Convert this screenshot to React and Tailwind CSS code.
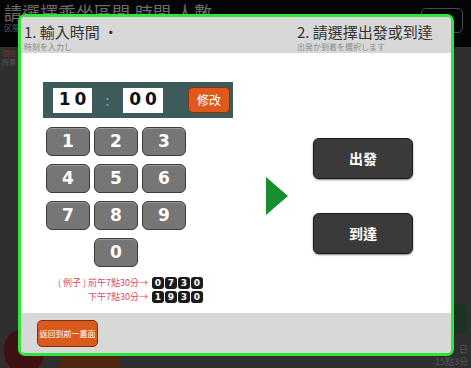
import { useState } from 'react'

const CJK = { fontFamily: '"Noto Sans CJK TC", "Noto Sans CJK JP", sans-serif' }
const NUM = { fontFamily: '"DejaVu Sans", "Noto Sans", sans-serif' }

function KeyButton({ label, onPress, className = '' }) {
  return (
    <button
      onClick={() => onPress(label)}
      className={`h-[29px] w-[44px] rounded-[6px] border border-[#3c3c3c] bg-[#767676] text-[17px] font-bold leading-none text-white shadow-[inset_0_1px_0_rgba(255,255,255,0.25)] ${className}`}
      style={NUM}
    >
      {label}
    </button>
  )
}

function DigitChips({ value }) {
  return (
    <div className="flex gap-[1px]">
      {value.split('').map((d, i) => (
        <span
          key={i}
          className="flex h-[12px] w-[12px] items-center justify-center rounded-[3px] bg-[#1b1b1b] text-[9px] font-bold leading-none text-white"
          style={NUM}
        >
          {d}
        </span>
      ))}
    </div>
  )
}

export default function App() {
  const [hour, setHour] = useState('10')
  const [minute, setMinute] = useState('00')

  const press = () => {}

  return (
    <div className="relative h-[368px] w-[471px] overflow-hidden bg-[#2f2f2f]" style={CJK}>
      {/* page behind the dialog */}
      <div className="flex h-[47px] items-start justify-between bg-[#050505] pl-[4px] pr-[8px]">
        <div>
          <p className="pt-[2px] text-[18px] leading-[20px] text-[#6a6a6a]">請選擇乘坐區間,時間,人數</p>
          <p className="text-[8px] leading-[12px] text-[#5a5a5a]">区間、時間、人数を選択してください</p>
        </div>
        <div className="mt-[8px] h-[25px] w-[42px] rounded-[5px] border border-[#4a4a4a]" />
      </div>
      <div className="pl-[2px] pt-[2px]">
        <p className="text-[7px] leading-[9px] text-[#7a3030]">現在</p>
        <p className="text-[7px] leading-[9px] text-[#555]">所要</p>
      </div>
      <div className="absolute bottom-[-6px] left-[3px] h-[46px] w-[42px] rounded-full border border-[#5a2020] bg-[#3e1212]" />
      <div className="absolute bottom-[-6px] left-[60px] h-[19px] w-[60px] rounded-[5px] bg-[#4f2610]" />
      <div className="absolute right-[4px] top-[304px] h-[29px] w-[16px] rounded-[5px] bg-[#1c3522]" />
      <div className="absolute bottom-[0px] right-[3px] text-right text-[9px] leading-[12px] text-[#555]">
        <p>日</p>
        <p>15點3分</p>
      </div>

      {/* dialog */}
      <div className="absolute left-[18px] top-[14px] flex h-[342px] w-[436px] flex-col overflow-hidden rounded-[7px] border-[3px] border-[#2ee63a] bg-white">
        <div className="flex h-[36px] shrink-0 bg-[#d8d8d8] pl-[3px]">
          <div className="w-[273px]">
            <p className="pt-[5px] text-[15px] leading-[19px] text-[#333]">1. 輸入時間 ·</p>
            <p className="pt-[1px] text-[8px] leading-[10px] text-[#8a8a8a]">時刻を入力し</p>
          </div>
          <div>
            <p className="pt-[5px] text-[15px] leading-[19px] text-[#333]">2. 請選擇出發或到達</p>
            <p className="pt-[1px] text-[8px] leading-[10px] text-[#8a8a8a]">出発か到着を選択します</p>
          </div>
        </div>

        <div className="flex flex-1 items-start pl-[22px]">
          <div className="w-[190px] pt-[29px]">
            <div className="flex h-[36px] items-center bg-[#3c5b5a] pl-[10px]">
              <span
                className="flex h-[25px] w-[39px] items-center justify-center bg-white text-[17px] font-bold tracking-[4px] text-[#111]"
                style={NUM}
              >
                <span className="pl-[4px]">{hour}</span>
              </span>
              <span className="w-[31px] text-center text-[14px] text-[#8aa5a4]">:</span>
              <span
                className="flex h-[25px] w-[40px] items-center justify-center bg-white text-[17px] font-bold tracking-[4px] text-[#111]"
                style={NUM}
              >
                <span className="pl-[4px]">{minute}</span>
              </span>
              <button
                onClick={() => { setHour(''); setMinute('') }}
                className="ml-[25px] h-[26px] w-[42px] rounded-[5px] border border-[#8a3510] bg-[#de5a1c] text-[12px] text-white"
              >
                修改
              </button>
            </div>

            <div className="ml-[3px] mt-[9px] grid w-[140px] grid-cols-[44px_44px_44px] gap-x-[4px] gap-y-[8px]">
              {['1', '2', '3', '4', '5', '6', '7', '8', '9'].map(n => (
                <KeyButton key={n} label={n} onPress={press} />
              ))}
              <KeyButton label="0" onPress={press} className="col-start-2" />
            </div>

            <div className="mt-[10px] flex flex-col gap-[2px] pl-[12px]">
              <div className="flex items-center gap-[4px]">
                <span className="w-[93px] text-right text-[9px] leading-[12px] text-[#e04a62]">( 例子 ) 前午7點30分→</span>
                <DigitChips value="0730" />
              </div>
              <div className="flex items-center gap-[4px]">
                <span className="w-[93px] text-right text-[9px] leading-[12px] text-[#e04a62]">下午7點30分→</span>
                <DigitChips value="1930" />
              </div>
            </div>
          </div>

          <svg className="ml-[33px] mt-[124px]" width="22" height="38" viewBox="0 0 22 38">
            <polygon points="0,0 22,19 0,38" fill="#16902e" />
          </svg>

          <div className="ml-[25px] mt-[85px] flex flex-col gap-[34px]">
            <button className="h-[41px] w-[100px] rounded-[6px] border border-[#1c1c1c] bg-[#3a3a3a] text-[14px] font-bold text-white shadow-[0_1px_2px_rgba(0,0,0,0.5)]">
              出發
            </button>
            <button className="h-[41px] w-[100px] rounded-[6px] border border-[#1c1c1c] bg-[#3a3a3a] text-[14px] font-bold text-white shadow-[0_1px_2px_rgba(0,0,0,0.5)]">
              到達
            </button>
          </div>
        </div>

        <div className="flex h-[40px] shrink-0 items-start bg-[#d8d8d8] pl-[16px] pt-[7px]">
          <button className="h-[27px] w-[61px] rounded-[5px] border border-[#7a3210] bg-[#d95a1c] text-[8px] text-white">
            返回到前一畫面
          </button>
        </div>
      </div>
    </div>
  )
}
